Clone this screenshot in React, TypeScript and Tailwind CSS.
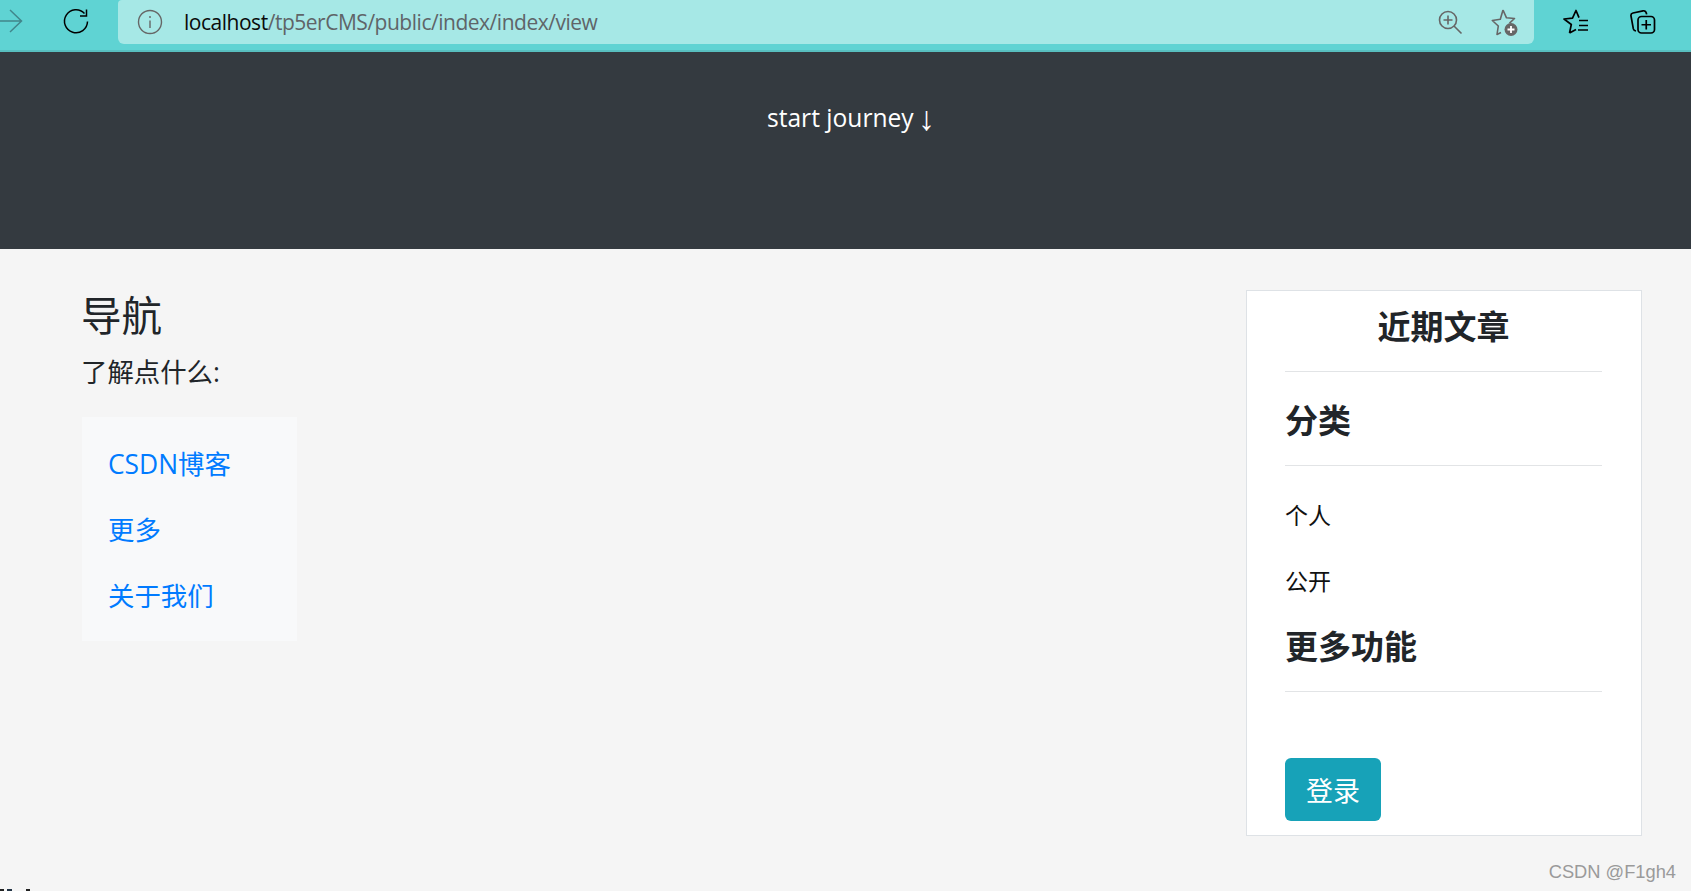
import React from 'react';

const cjk = "font-['Open_Sans','Noto_Sans_CJK_SC',sans-serif]";

function Toolbar() {
  return (
    <div className="flex h-[52px] shrink-0 items-start border-b-2 border-[#58bfc0] bg-[#5fd3d3]">
      <div className="flex h-[44px] w-[118px] shrink-0 items-center">
        <svg width="118" height="44" viewBox="0 0 118 44" fill="none">
          <path d="M-2 21H21.500M10 10l11.500 11L10 32" stroke="#41868b" strokeWidth="1.5" />
          <path d="M87.500 21.500A11.500 11.500 0 1 1 84.500 13.500M86.500 9.500V16H80" stroke="#000" strokeWidth="1.500" />
        </svg>
      </div>
      <div className="flex h-[44px] w-[1416px] shrink-0 items-center rounded-b-[6px] rounded-tl-[4px] bg-[#a6e8e6]">
        <svg className="ml-[19px]" width="26" height="26" viewBox="0 0 26 26" fill="none" stroke="#666" strokeWidth="1.4">
          <circle cx="13" cy="13" r="11.500" />
          <path d="M13 11.500V19M13 7v2" />
        </svg>
        <div className={`ml-[21px] text-[21px] leading-none tracking-[-0.48px] text-[#5f6468] ${cjk}`}>
          <span className="text-[#0a0a0a]">localhost</span>/tp5erCMS/public/index/index/view
        </div>
        <svg className="ml-auto" width="26" height="26" viewBox="0 0 26 26" fill="none" stroke="#666" strokeWidth="1.6">
          <circle cx="11" cy="11" r="8.500" />
          <path d="M17 17l7.500 7.500M11 6.500v9M6.500 11h9" />
        </svg>
        <svg className="ml-[26px] mr-[15px]" width="30" height="30" viewBox="0 0 30 30" fill="none">
          <path d="M14 3l3.500 7.800 8 .7-5 4.600M12 25.500l-4 2 1.300-8.500-6-5.500 8-1.200L14 3" stroke="#666" strokeWidth="1.6" strokeLinejoin="round" />
          <circle cx="22" cy="22.500" r="6.500" fill="#666" />
          <path d="M22 19v7M18.500 22.500h7" stroke="#fff" strokeWidth="1.8" />
        </svg>
      </div>
      <div className="flex h-[44px] flex-1 items-center">
        <svg className="ml-[29px]" width="26" height="26" viewBox="0 0 26 26" fill="none" stroke="#000" strokeWidth="1.7" strokeLinejoin="round">
          <path d="M6.500 24l1.800-8.500L1 10l8.500-.8L13 1.500l3 7.200M6.500 24l6.500-3.500M16 11.500h9M16 16.500h9M15 21h10" />
        </svg>
        <svg className="ml-[41px]" width="26" height="26" viewBox="0 0 26 26" fill="none" stroke="#000" strokeWidth="1.7" strokeLinejoin="round">
          <path d="M6 22c-1.500-.2-2.300-1-2.700-2.300L1 7c-.3-1.600.4-2.600 2-3l10-2.200c2-.3 3.200.6 3.700 3.500" />
          <rect x="8" y="7.500" width="16.500" height="16.500" rx="3.500" />
          <path d="M16.250 11v9.500M11.500 15.750H21" />
        </svg>
      </div>
    </div>
  );
}

function Sidebar() {
  const heading = 'text-[33px] font-bold leading-[48px] text-[#212529]';
  return (
    <aside className={`mt-[41px] h-[546px] w-[396px] border border-[#dee2e6] bg-white pl-[38px] pr-[39px] ${cjk}`}>
      <h3 className={`mt-[12px] text-center ${heading}`}>近期文章</h3>
      <hr className="mt-[20px] border-[#e2e4e6]" />
      <h3 className={`mt-[25px] ${heading}`}>分类</h3>
      <hr className="mt-[20px] border-[#e2e4e6]" />
      <div className="mt-[16px] text-[23px] leading-[66px] text-[#111]">
        <div>个人</div>
        <div>公开</div>
      </div>
      <h3 className={`mt-[9px] ${heading}`}>更多功能</h3>
      <hr className="mt-[20px] border-[#e2e4e6]" />
      <button className="mt-[66px] h-[63px] w-[96px] rounded-[6px] bg-[#17a2b8] pt-[2px] text-[27px] leading-none text-white">登录</button>
    </aside>
  );
}

export default function App() {
  return (
    <div className={`relative flex h-[891px] flex-col overflow-hidden bg-[#f5f5f5] ${cjk}`}>
      <Toolbar />
      <header className="flex h-[197px] shrink-0 justify-center bg-[#343a40] pl-[11px] pt-[49px]">
        <div className="flex h-[34px] items-center text-[24.6px] leading-[34px] text-white">
          <span className="whitespace-pre">start journey </span>
          <span className="-ml-[2px] font-['Liberation_Sans',sans-serif] text-[34px] leading-none">↓</span>
        </div>
      </header>
      <main className="flex items-start justify-between pl-[82px] pr-[49px]">
        <div className="pt-[43px]">
          <h1 className="-ml-[1px] text-[40.5px] leading-[48px] text-[#212529]">导航</h1>
          <p className="-ml-[1px] mt-[15px] text-[26.4px] leading-[34px] text-[#212529]">了解点什么:</p>
          <ul className="mt-[28px] w-[215px] bg-[#f8f9fa] pb-[12px] pl-[26px] pt-[14px] text-[26.4px] leading-[66px] text-[#007bff]">
            <li>CSDN博客</li>
            <li>更多</li>
            <li>关于我们</li>
          </ul>
        </div>
        <Sidebar />
      </main>
      <div className="absolute bottom-[7px] right-[15px] font-['Liberation_Sans',sans-serif] text-[18.3px] leading-[24px] text-[#9a9a9a]">CSDN @F1gh4</div>
      <div className="mt-auto flex h-[2px] gap-[3px]">
        <span className="w-[4px] bg-[#222]" />
        <span className="w-[5px] bg-[#234]" />
        <span className="ml-[11px] w-[4px] bg-[#222]" />
      </div>
    </div>
  );
}
